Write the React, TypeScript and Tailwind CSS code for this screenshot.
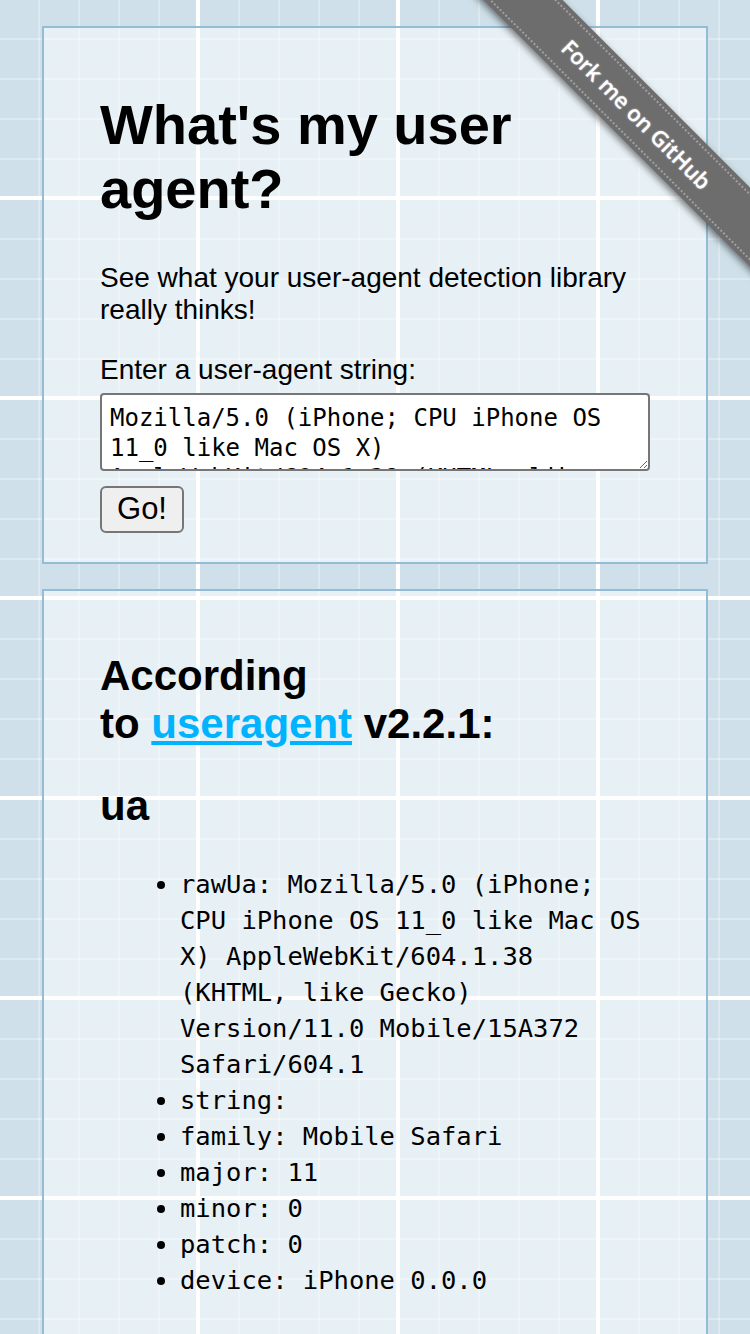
import React from 'react';

const UA =
  'Mozilla/5.0 (iPhone; CPU iPhone OS 11_0 like Mac OS X) AppleWebKit/604.1.38 (KHTML, like Gecko) Version/11.0 Mobile/15A372 Safari/604.1';

const fields: [string, string][] = [
  ['rawUa', UA],
  ['string', ''],
  ['family', 'Mobile Safari'],
  ['major', '11'],
  ['minor', '0'],
  ['patch', '0'],
  ['device', 'iPhone 0.0.0'],
];

function Ribbon() {
  return (
    <div className="pointer-events-none absolute right-0 top-0 h-[300px] w-[300px] overflow-hidden">
      <div className="absolute left-[-23.5px] top-[85.5px] flex h-[56px] w-[420px] rotate-45 items-center justify-center bg-[#6d6d6d] shadow-[0_3px_7px_rgba(0,0,0,0.5)]">
        <div className="absolute inset-x-0 top-[4px] border-t-2 border-dotted border-white/35" />
        <div className="absolute inset-x-0 bottom-[4px] border-t-2 border-dotted border-white/35" />
        <span className="font-['Open_Sans',Arial,sans-serif] text-[22px] font-semibold text-white [text-shadow:0_0_2px_rgba(255,255,255,0.7)]">
          Fork me on GitHub
        </span>
      </div>
    </div>
  );
}

export default function App() {
  return (
    <div className="relative min-h-screen bg-[#cfe0ea] pt-[26px] pb-[28px] font-['Liberation_Sans',Arial,sans-serif] text-black [background-image:linear-gradient(90deg,transparent_196px,#fff_196px),linear-gradient(180deg,transparent_196px,#fff_196px),linear-gradient(90deg,transparent_38px,rgba(255,255,255,0.3)_38px),linear-gradient(180deg,transparent_38px,rgba(255,255,255,0.3)_38px)] [background-size:200px_200px,200px_200px,40px_40px,40px_40px]">
      {/* input card */}
      <div className="ml-[42px] w-[666px] border-2 border-[#94bcd4] bg-white/50 px-[56px] pt-[28px] pb-[29px]">
        <h1 className="mt-[37px] mb-[41px] text-[56px] leading-[64px] font-bold">What's my user agent?</h1>
        <p className="text-[28px] leading-[32px]">See what your user-agent detection library really thinks!</p>
        <label className="mt-[28px] block text-[28px] leading-[32px]">Enter a user-agent string:</label>
        <textarea
          defaultValue={UA}
          className="mt-[7px] block h-[78px] w-full overflow-hidden rounded-[4px] border-2 border-[#767676] bg-white px-[8px] pt-[8px] font-['DejaVu_Sans_Mono',monospace] text-[24px] leading-[30px] text-black"
        />
        <button className="mt-[15px] block h-[47px] w-[84px] rounded-[6px] border-2 border-[#767676] bg-[#efefef] pb-[3px] text-[31px] leading-none text-black">
          Go!
        </button>
      </div>

      {/* result card */}
      <div className="mt-[25px] ml-[42px] w-[666px] border-2 border-[#94bcd4] bg-white/50 px-[56px] pt-[28px] pb-[28px]">
        <h2 className="mt-[33px] text-[42px] leading-[48px] font-bold">
          According{' '}
          <span className="whitespace-nowrap">
            to <a className="text-[#00b3ff] underline">useragent</a> v2.2.1:
          </span>
        </h2>
        <h2 className="mt-[34px] text-[42px] leading-[48px] font-bold">ua</h2>
        <ul className="mt-[36px] mb-[28px] list-disc pl-[80px] font-['DejaVu_Sans_Mono',monospace] text-[25.5px] leading-[36px]">
          {fields.map(([k, v]) => (
            <li key={k}>
              {k}: {v}
            </li>
          ))}
        </ul>
      </div>

      <Ribbon />
    </div>
  );
}
